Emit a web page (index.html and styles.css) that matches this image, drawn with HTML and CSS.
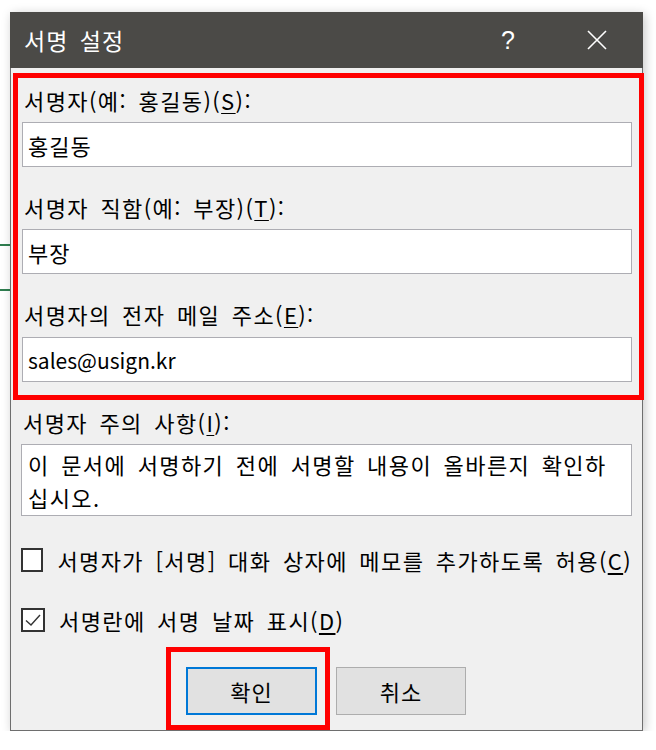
FILE: index.html
```html
<!DOCTYPE html>
<html lang="ko">

<head>
    <meta charset="UTF-8">
    <meta name="viewport" content="width=device-width, initial-scale=1.0">
    <title>서명 설정</title>
    <link rel="stylesheet" href="styles.css">
</head>

<body>
    <div class="screen">
        <div class="sheet-edge">
            <div class="grid-line"></div>
            <div class="grid-line second"></div>
        </div>

        <div class="dialog">
            <div class="title-bar">
                <span class="title">서명 설정</span>
                <span class="title-btn">?</span>
                <span class="title-btn close">
                    <svg width="20" height="20" viewBox="0 0 20 20">
                        <path d="M1 1 L19 19 M19 1 L1 19" stroke="#fff" stroke-width="1.6" fill="none" />
                    </svg>
                </span>
            </div>

            <div class="dialog-body">
                <!-- 빨간 강조 박스: 서명자 정보 -->
                <div class="highlight fields">
                    <label class="field-label">서명자(예: 홍길동)(<u>S</u>):</label>
                    <input type="text" class="text-input" value="홍길동">

                    <label class="field-label spaced">서명자 직함(예: 부장)(<u>T</u>):</label>
                    <input type="text" class="text-input" value="부장">

                    <label class="field-label spaced last">서명자의 전자 메일 주소(<u>E</u>):</label>
                    <input type="text" class="text-input latin" value="sales@usign.kr">
                </div>

                <label class="field-label notes-label">서명자 주의 사항(<u>I</u>):</label>
                <div class="text-area">이 문서에 서명하기 전에 서명할 내용이 올바른지 확인하<br>십시오.</div>

                <div class="check-row first">
                    <span class="check-box"></span>
                    <span class="check-text">서명자가 [서명] 대화 상자에 메모를 추가하도록 허용(<u>C</u>)</span>
                </div>
                <div class="check-row second">
                    <span class="check-box">
                        <svg width="20" height="20" viewBox="0 0 20 20">
                            <path d="M3 10.5 L8 15 L17 5" stroke="#333" stroke-width="1.4" fill="none" />
                        </svg>
                    </span>
                    <span class="check-text">서명란에 서명 날짜 표시(<u>D</u>)</span>
                </div>

                <div class="button-row">
                    <!-- 빨간 강조 박스: 확인 버튼 -->
                    <div class="highlight ok-wrap">
                        <button class="btn btn-ok">확인</button>
                    </div>
                    <button class="btn">취소</button>
                </div>
            </div>
        </div>
    </div>
</body>

</html>
```

FILE: styles.css
```css
body {
    margin: 0;
    background-color: #fff;
    font-family: "Noto Sans CJK KR", "Noto Sans", sans-serif;
    color: #000;
}

.screen {
    display: flex;
    align-items: flex-start;
    padding-top: 12px;
}

/* 뒤쪽 엑셀 시트 가장자리 */
.sheet-edge {
    width: 10px;
}

.grid-line {
    height: 2px;
    margin-top: 232px;
    background-color: #2f7d4f;
}

.grid-line.second {
    margin-top: 43px;
}

.dialog {
    width: 633px;
    box-sizing: border-box;
    background-color: #f0f0f0;
    border: 1px solid #6e6e6e;
    border-top: none;
    box-shadow: 2px 2px 10px rgba(0, 0, 0, 0.22);
    letter-spacing: 1.4px;
    word-spacing: 4px;
}

.title-bar {
    display: flex;
    align-items: center;
    height: 56px;
    margin: 0 -1px;
    padding: 0 19px 0 14px;
    background-color: #4b4a47;
    color: #fff;
}

.title {
    flex: 1;
    font-size: 23px;
    line-height: 30px;
    letter-spacing: 1px;
}

.title-btn {
    display: flex;
    align-items: center;
    justify-content: center;
    width: 54px;
    height: 56px;
    font-size: 25px;
    font-family: "Liberation Sans", sans-serif;
    letter-spacing: 0;
}

.title-btn.close {
    margin-left: 35px;
}

.dialog-body {
    padding: 0 10px 0 10px;
}

.highlight {
    border: 5px solid #ff0000;
}

.fields {
    margin: 5px -12px 0 -8px;
    padding: 7px 7px 13px 4px;
}

.field-label {
    display: block;
    font-size: 22px;
    line-height: 30px;
    height: 30px;
    padding-left: 2px;
    margin-bottom: 7px;
    white-space: nowrap;
}

.field-label.spaced {
    margin-top: 25px;
}

.field-label.last {
    margin-bottom: 8px;
}

.field-label u {
    text-underline-offset: 3px;
    text-decoration-thickness: 1px;
}

.text-input {
    display: block;
    width: 100%;
    height: 45px;
    box-sizing: border-box;
    border: 1px solid #adadb3;
    background-color: #fff;
    padding: 0 5px;
    font-family: inherit;
    font-size: 22px;
    letter-spacing: 1px;
    color: #000;
    outline: none;
}

.text-input.latin {
    font-size: 21px;
    letter-spacing: 0;
}

.notes-label {
    margin-top: 7px;
}

.text-area {
    height: 72px;
    box-sizing: border-box;
    border: 1px solid #adadb3;
    background-color: #fff;
    padding: 3px 6px;
    font-size: 22px;
    line-height: 33px;
    white-space: nowrap;
}

.check-row {
    display: flex;
    align-items: center;
    height: 24px;
}

.check-row.first {
    margin-top: 32px;
}

.check-row.second {
    margin-top: 36px;
}

.check-box {
    display: flex;
    align-items: center;
    justify-content: center;
    width: 24px;
    height: 24px;
    box-sizing: border-box;
    border: 2px solid #333;
    background-color: #fff;
    margin-right: 14px;
}

.check-text {
    font-size: 22px;
    line-height: 30px;
    white-space: nowrap;
}

.check-text u {
    text-underline-offset: 3px;
}

.button-row {
    display: flex;
    align-items: flex-start;
    margin-top: 15px;
    margin-left: 145px;
}

.ok-wrap {
    padding: 15px 8px 10px 15px;
    margin-right: 6px;
}

.btn {
    width: 130px;
    height: 48px;
    box-sizing: border-box;
    border: 1px solid #adadad;
    background-color: #e1e1e1;
    font-family: inherit;
    font-size: 22px;
    letter-spacing: 1px;
    color: #000;
    padding: 0;
    margin-top: 20px;
}

.btn-ok {
    width: 131px;
    border: 2px solid #0078d7;
    margin-top: 0;
}
```
